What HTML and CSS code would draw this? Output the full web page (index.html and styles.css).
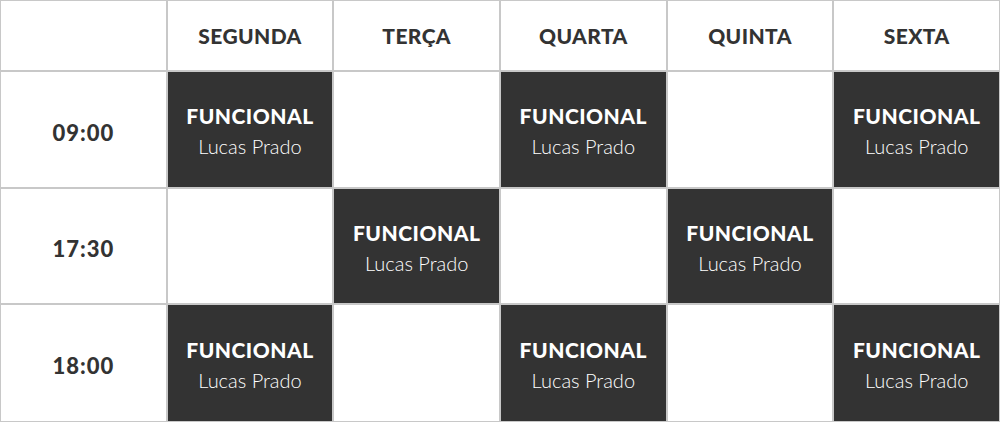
FILE: index.html
```html
<!DOCTYPE html>
<html lang="pt">
<head>
<meta charset="utf-8">
<title>Horários</title>
<link rel="stylesheet" href="styles.css">
</head>
<body>
<div class="schedule">
  <div class="cell head"></div>
  <div class="cell head">SEGUNDA</div>
  <div class="cell head">TERÇA</div>
  <div class="cell head">QUARTA</div>
  <div class="cell head">QUINTA</div>
  <div class="cell head">SEXTA</div>

  <div class="cell time">09:00</div>
  <div class="cell class"><span class="name">FUNCIONAL</span><span class="coach">Lucas Prado</span></div>
  <div class="cell"></div>
  <div class="cell class"><span class="name">FUNCIONAL</span><span class="coach">Lucas Prado</span></div>
  <div class="cell"></div>
  <div class="cell class"><span class="name">FUNCIONAL</span><span class="coach">Lucas Prado</span></div>

  <div class="cell time">17:30</div>
  <div class="cell"></div>
  <div class="cell class"><span class="name">FUNCIONAL</span><span class="coach">Lucas Prado</span></div>
  <div class="cell"></div>
  <div class="cell class"><span class="name">FUNCIONAL</span><span class="coach">Lucas Prado</span></div>
  <div class="cell"></div>

  <div class="cell time">18:00</div>
  <div class="cell class"><span class="name">FUNCIONAL</span><span class="coach">Lucas Prado</span></div>
  <div class="cell"></div>
  <div class="cell class"><span class="name">FUNCIONAL</span><span class="coach">Lucas Prado</span></div>
  <div class="cell"></div>
  <div class="cell class"><span class="name">FUNCIONAL</span><span class="coach">Lucas Prado</span></div>
</div>
</body>
</html>
```

FILE: styles.css
```css
* { box-sizing: border-box; }
html, body { margin: 0; padding: 0; background: #fff; }
body { font-family: Lato, "Open Sans", Arial, sans-serif; color: #333; }

.schedule {
  display: grid;
  grid-template-columns: repeat(6, 1fr);
  grid-template-rows: 71px 117px 116px 118px;
  width: 1000px;
}

.cell {
  border: 1px solid #c8c8c8;
  display: flex;
  flex-direction: column;
  align-items: center;
  justify-content: center;
  background: #fff;
}

.head {
  font-weight: 900;
  font-size: 21px;
  letter-spacing: 0.4px;
  color: #333;
}

.time {
  font-weight: 900;
  font-size: 22px;
  letter-spacing: 1px;
  color: #333;
  padding-top: 5px;
}

.class {
  background: #333;
  color: #fff;
  gap: 4px;
  padding-top: 3px;
}

.name {
  font-weight: 900;
  font-size: 21px;
  letter-spacing: 0.5px;
  line-height: 26px;
}

.coach {
  font-weight: 300;
  font-size: 20px;
  line-height: 26px;
}
```
